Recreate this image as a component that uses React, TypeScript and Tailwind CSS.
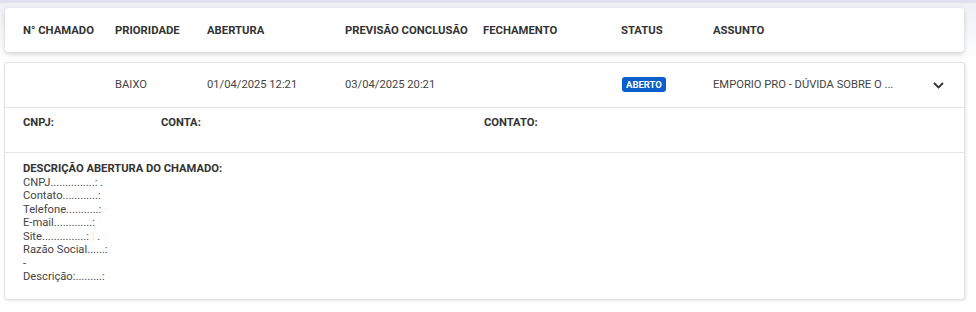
import React from "react";

const cols = ["w-[92px]", "w-[92px]", "w-[138px]", "w-[138px]", "w-[138px]", "w-[92px]"];

function Pale({ children }: { children: React.ReactNode }) {
  return <span className="text-[#f3e3c8]">{children}</span>;
}

export default function App() {
  const headers = ["N° CHAMADO", "PRIORIDADE", "ABERTURA", "PREVISÃO CONCLUSÃO", "FECHAMENTO", "STATUS"];
  return (
    <div
      className="w-[976px] h-[312px] bg-white overflow-hidden text-[#333]"
      style={{ fontFamily: "Roboto, 'Liberation Sans', Arial, sans-serif" }}
    >
      <div className="h-[3px] bg-[#dde3ee]" />
      <div className="bg-gradient-to-b from-[#eef0f5] to-white pt-[5px] pl-[5px] pr-[12px]">
        <div className="h-[44px] pt-[2px] bg-white rounded-[4px] shadow-[0_2px_5px_rgba(0,0,0,0.18)] flex items-center pl-[18px] text-[11.3px] font-bold text-[#333]">
          {headers.map((h, i) => (
            <div key={h} className={cols[i]}>
              {h}
            </div>
          ))}
          <div>ASSUNTO</div>
        </div>
        <div className="h-[10px]" />
      </div>
      <div className="ml-[4px] mr-[11px] h-[238px] bg-white border border-[#e2e2e2] rounded-[3px] shadow-[1px_1px_3px_rgba(0,0,0,0.1)] flex flex-col">
        <div className="h-[45px] flex items-center pl-[18px] text-[11.2px] text-[#444] border-b border-[#e4e4e4]">
          <div className={cols[0]}></div>
          <div className={cols[1]}>BAIXO</div>
          <div className={cols[2]}>01/04/2025 12:21</div>
          <div className={cols[3]}>03/04/2025 20:21</div>
          <div className={cols[4]}></div>
          <div className={cols[5]}>
            <span className="inline-block ml-[1px] bg-[#0b5fcc] text-white text-[9.5px] font-bold px-[4px] leading-[15px] rounded-[3px]">
              ABERTO
            </span>
          </div>
          <div className="w-[200px] whitespace-nowrap">EMPORIO PRO - DÚVIDA SOBRE O ...</div>
          <div className="w-[50px] flex justify-center">
            <svg width="11" height="7" viewBox="0 0 11 7" fill="none">
              <path d="M1 1l4.5 4.5L10 1" stroke="#333" strokeWidth="1.8" />
            </svg>
          </div>
        </div>
        <div className="h-[45px] pt-[7px] pl-[18px] flex text-[11.2px] font-bold text-[#333] border-b border-[#e4e4e4]">
          <div className="w-[138px]">CNPJ:</div>
          <div className="w-[323px]">CONTA:</div>
          <div>CONTATO:</div>
        </div>
        <div className="pt-[9px] pl-[18px] text-[11.2px] leading-[13.5px] text-[#444]">
          <div className="font-bold text-[#333]">DESCRIÇÃO ABERTURA DO CHAMADO:</div>
          <div>CNPJ...............: .</div>
          <div>Contato............:</div>
          <div>
            Telefone...........: <Pale>·</Pale>
          </div>
          <div>
            E-mail.............: <Pale>·</Pale>
          </div>
          <div>
            Site...............: <Pale>|</Pale> . <Pale>·</Pale>
          </div>
          <div>
            Razão Social......: <Pale>'</Pale>
          </div>
          <div>-</div>
          <div>Descrição:.........:</div>
        </div>
      </div>
    </div>
  );
}
